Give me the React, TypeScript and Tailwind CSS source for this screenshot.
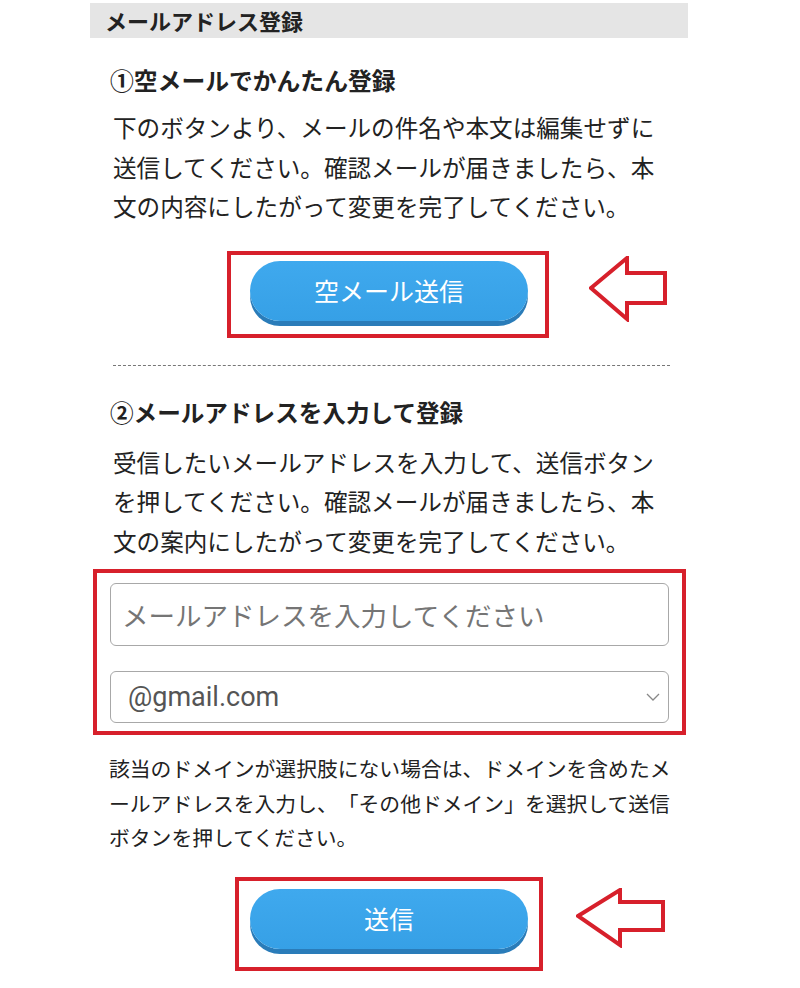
import React from "react";

const JP = "font-['Noto_Sans_CJK_JP',sans-serif] [text-spacing-trim:space-all]";

const Arrow: React.FC<{ w: number; h: number; pts: string; className?: string }> = ({
  w,
  h,
  pts,
  className
}) => (
  <svg width={w} height={h} viewBox={`0 0 ${w} ${h}`} className={className}>
    <polygon
      points={pts}
      fill="white"
      stroke="#d7202b"
      strokeWidth={4}
      strokeLinejoin="miter"
    />
  </svg>
);

const BlueButton: React.FC<{ label: string }> = ({ label }) => (
  <button
    type="button"
    className="flex h-[60px] w-[278px] items-center justify-center rounded-full bg-gradient-to-b from-[#3fa9ee] to-[#36a0e6] text-[25px] text-white shadow-[0_5px_0_#2a7cb9]"
  >
    {label}
  </button>
);

export default function App() {
  return (
    <div className={`min-h-[988px] w-[800px] bg-white text-[#222] ${JP}`}>
      <div className="ml-[90px] w-[598px]">
        {/* title bar */}
        <div className="mt-[3px] h-[35px] bg-[#e5e5e5] pl-[15px] text-[22px] font-bold leading-[35px]">
          メールアドレス登録
        </div>

        <div className="pl-[20px]">
          {/* section 1 */}
          <h2 className="mt-[26px] whitespace-nowrap text-[23.8px] font-bold leading-[32px]">
            ①空メールでかんたん登録
          </h2>
          <p className="mt-[12px] whitespace-nowrap pl-[3px] text-[23.6px] leading-[39.5px]">
            下のボタンより、メールの件名や本文は編集せずに
            <br />
            送信してください。確認メールが届きましたら、本
            <br />
            文の内容にしたがって変更を完了してください。
          </p>
        </div>

        <div className="mt-[24px] flex items-start">
          <div className="ml-[137px] h-[87px] w-[322px] border-4 border-[#d7202b] pl-[19px] pt-[6px]">
            <BlueButton label="空メール送信" />
          </div>
          <Arrow
            className="ml-[40px] mt-[5px]"
            w={79}
            h={66}
            pts="2,32 38,2 38,17 76,17 76,47 38,47 38,63"
          />
        </div>

        {/* divider */}
        <div className="ml-[23px] mt-[27px] w-[557px] border-t border-dashed border-[#777]" />

        <div className="pl-[20px]">
          {/* section 2 */}
          <h2 className="mt-[30px] whitespace-nowrap text-[23.6px] font-bold leading-[32px]">
            ②メールアドレスを入力して登録
          </h2>
          <p className="mt-[15px] whitespace-nowrap pl-[3px] text-[23.6px] leading-[39.5px]">
            受信したいメールアドレスを入力して、送信ボタン
            <br />
            を押してください。確認メールが届きましたら、本
            <br />
            文の案内にしたがって変更を完了してください。
          </p>
        </div>

        <div className="ml-[3px] mt-[8px] w-[593px] border-4 border-[#d7202b] px-[13px] pb-[8px] pt-[10px]">
          <div className="flex h-[63px] items-center rounded-[6px] border border-[#a8a8a8] pl-[11px] text-[26.5px] text-[#757575]">
            メールアドレスを入力してください
          </div>
          <div className="mt-[25px] flex h-[52px] items-center justify-between rounded-[6px] border border-[#a8a8a8] pl-[17px] pr-[8px]">
            <span className="font-['Roboto',sans-serif] text-[27px] text-[#555]">
              @gmail.com
            </span>
            <svg width="14" height="10" viewBox="0 0 14 10">
              <polyline
                points="1,2 7,8 13,2"
                fill="none"
                stroke="#888"
                strokeWidth={1.3}
              />
            </svg>
          </div>
        </div>

        <p className="ml-[19px] mt-[16px] whitespace-nowrap text-[20.8px] leading-[34.5px] text-[#222]">
          該当のドメインが選択肢にない場合は、ドメインを含めたメ
          <br />
          ールアドレスを入力し、「その他ドメイン」を選択して送信
          <br />
          ボタンを押してください。
        </p>

        <div className="mt-[22px] flex items-start">
          <div className="ml-[145px] h-[94px] w-[308px] border-4 border-[#d7202b] pl-[11px] pt-[8px]">
            <BlueButton label="送信" />
          </div>
          <Arrow
            className="ml-[33px] mt-[11px]"
            w={90}
            h={60}
            pts="2,28 44,2 44,14 87,14 87,42 44,42 44,57"
          />
        </div>
      </div>
    </div>
  );
}
